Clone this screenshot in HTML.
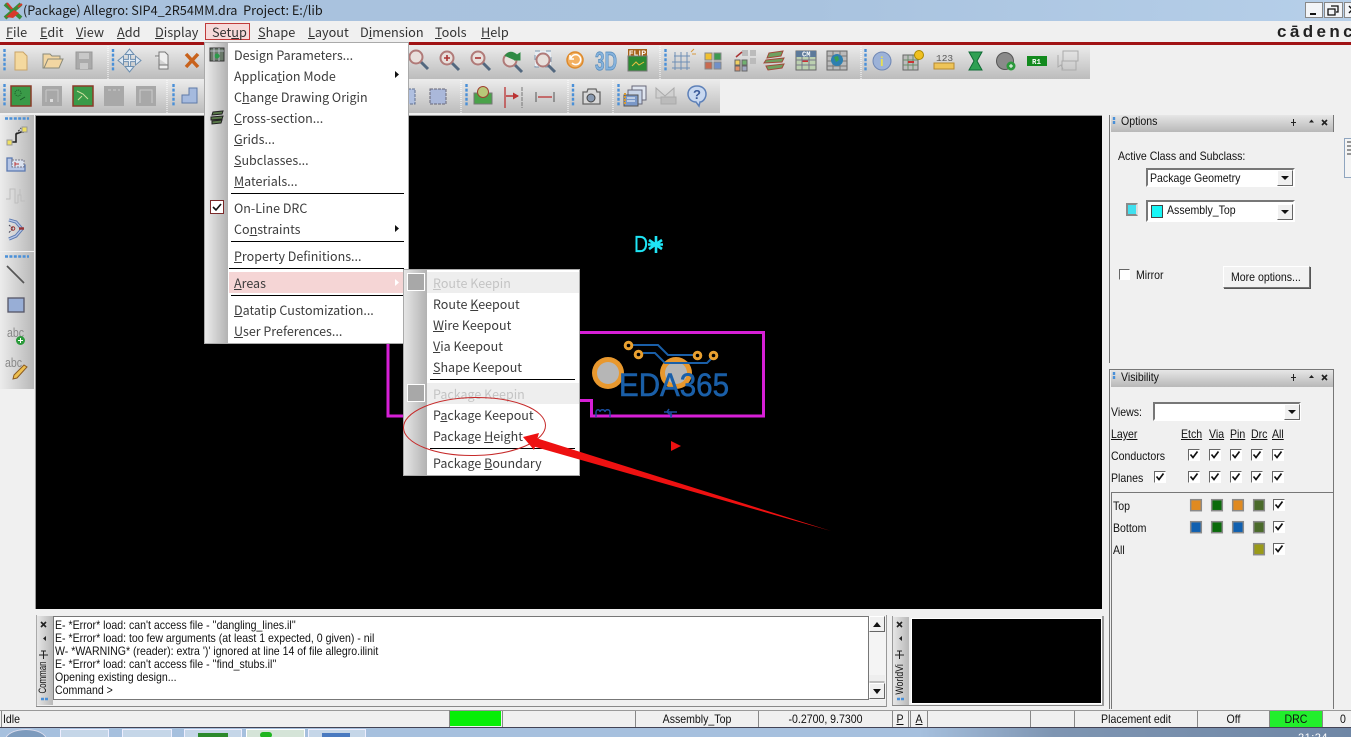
<!DOCTYPE html>
<html><head><meta charset="utf-8"><title>Allegro</title>
<style>
html,body{margin:0;padding:0;width:1351px;height:737px;overflow:hidden;background:#f0f0f0}
#p{position:relative;width:1351px;height:737px;overflow:hidden;background:#f0f0f0}
.b{position:absolute}
.t{position:absolute;white-space:nowrap;line-height:18px;height:18px;font-family:"Liberation Sans","Noto Sans CJK SC",sans-serif}
.y{font-family:"Noto Sans CJK SC","Liberation Sans",sans-serif;font-size:12.5px;color:#3c3c3c}
.m{font-family:"Noto Sans CJK SC","Liberation Sans",sans-serif;font-size:12.7px;color:#333}
.a{font-size:12px;color:#111;transform:scaleX(.88);transform-origin:0 50%}
.c{font-size:12px;color:#111;transform:scaleX(.88);transform-origin:50% 50%;text-align:center}
svg{position:absolute;left:0;top:0}
</style></head><body><div id="p">

<div class="b" style="left:0;top:0;width:1351px;height:21px;background:linear-gradient(90deg,#a9c2dd,#a9c3df 60%,#b6cfe9)"></div>
<div class="b" style="left:0;top:42px;width:1351px;height:3px;background:#a01214"></div>
<div class="b" style="left:0;top:45px;width:1090px;height:34px;background:linear-gradient(#ececec,#bcbcbc)"></div>
<div class="b" style="left:0;top:79px;width:720px;height:34px;background:linear-gradient(#ececec,#bcbcbc)"></div>
<div class="b" style="left:0;top:115px;width:34px;height:136px;background:linear-gradient(90deg,#ececec,#b8b8b8)"></div>
<div class="b" style="left:0;top:252px;width:34px;height:137px;background:linear-gradient(90deg,#ececec,#b8b8b8)"></div>
<div class="b" style="left:35px;top:115px;width:1067px;height:494px;background:#000;border-top:1px solid #999;box-sizing:border-box;border-left:1px solid #999"></div>

<svg width="1351" height="737" viewBox="0 0 1351 737">
<defs>
<g id="grip"><path d="M0 0v23" stroke="#4a90d8" stroke-width="2.4" stroke-dasharray="3 1.6"/></g>
<g id="mag"><path d="M4 4l8 8" stroke="#53687f" stroke-width="3"/><circle r="6.5" fill="#e8e0dc" stroke="#b07a78" stroke-width="2"/></g>
</defs>

<!-- separators -->
<g stroke="#fff" stroke-dasharray="1 1">
<path d="M108 46v33M660 46v33M861 46v33M167 80v33M461 80v33M568 80v33M613 80v33"/></g>
<!-- grips -->
<use href="#grip" x="4.5" y="49"/><use href="#grip" x="113" y="49"/><use href="#grip" x="665.5" y="49"/><use href="#grip" x="865.5" y="49"/>
<use href="#grip" x="4.5" y="84"/><use href="#grip" x="173.5" y="84"/><use href="#grip" x="466.5" y="84"/><use href="#grip" x="573" y="84"/><use href="#grip" x="618.5" y="84"/>
<path d="M5 118.5h24M5 256.5h24" stroke="#4a90d8" stroke-width="2.4" stroke-dasharray="3 1.4"/>

<!-- row1 -->
<path d="M15 52h8l4 4v14H15z" fill="#f4d99f" stroke="#c9a468"/>
<path d="M43 68V54h7l2 2h8v3h-12l-4 9zM44 68l4-9h15l-4 9z" fill="#f2d6a2" stroke="#8a8a7a"/>
<path d="M76 52h16v17H76z" fill="#aaa" stroke="#999"/><path d="M79 53h10v6H79zM80 63h8v6h-8z" fill="#c8c8c8"/>
<path d="M129.5 53v15M122 60.5h15" stroke="#6d8fb0" stroke-width="3.2"/><path d="M129.5 53v15M122 60.5h15" stroke="#e3ecf5" stroke-width="1.2"/>
<path d="M129.5 49l4.500 5.500h-9zM129.5 72l4.500-5.500h-9zM118 60.5l5.500-4.500v9zM141 60.5l-5.500-4.500v9z" fill="#dfe9f3" stroke="#6d8fb0"/>
<path d="M159 52h6l3 3v10h-9zM155 56h4v13h9v-4" fill="#efefef" stroke="#777"/>
<path d="M186 54l12 13M198 54l-12 13" stroke="#c8621c" stroke-width="3.5"/>
<use href="#mag" x="416" y="57"/>
<use href="#mag" x="447" y="58"/><path d="M444 58h6M447 55v6" stroke="#a33" stroke-width="1.6"/>
<use href="#mag" x="478" y="58"/><path d="M475 58h6" stroke="#a33" stroke-width="1.6"/>
<use href="#mag" x="510" y="60"/><path d="M505 56q5-7 12-1l3-2v7h-6" fill="#2f8a45" stroke="#2f8a45"/>
<path d="M535 51h16v16h-16z" fill="#e8eef4" stroke="#7d95ad" stroke-dasharray="5 6"/><use href="#mag" x="543" y="60"/>
<circle cx="575" cy="60" r="8" fill="#f3b061" stroke="#dd8a2c" stroke-width="1.5"/><path d="M571 58a5 5 0 1 1 1 5M570 55v4h4" fill="none" stroke="#fff" stroke-width="1.5"/>
<text x="595" y="70" font-family="Liberation Sans" font-weight="700" font-size="26" fill="#86b2dc" stroke="#4f87b8" stroke-width=".7" textLength="22" lengthAdjust="spacingAndGlyphs">3D</text>
<rect x="628" y="49" width="19" height="7" fill="#a5621b"/><rect x="628" y="56" width="19" height="15" fill="#2b8a32" stroke="#777"/><path d="M632 66l4-4 3 3 5-3" stroke="#e8c040" fill="none"/>
<text x="629" y="55.5" font-family="Liberation Sans" font-weight="700" font-size="7" fill="#fff" textLength="17">FLIP</text>
<path d="M674 56h16M672 62h18M672 68h18M675 52v18M681 52v18M687 52v18" stroke="#6f8fb5"/><path d="M691 52l3-3M692 54h4" stroke="#d89a40"/>
<rect x="705" y="53" width="7" height="7" fill="#f0c030" stroke="#888"/><rect x="714" y="53" width="7" height="7" fill="#3c9a50" stroke="#888"/><rect x="705" y="62" width="7" height="7" fill="#c86a50" stroke="#888"/><rect x="714" y="62" width="7" height="7" fill="#7090c8" stroke="#888"/>
<rect x="735" y="60" width="5" height="5" fill="#f0d060" stroke="#666"/><rect x="742" y="60" width="5" height="5" fill="#70b070" stroke="#666"/><rect x="735" y="66" width="5" height="5" fill="#e0906a" stroke="#666"/><rect x="742" y="66" width="5" height="5" fill="#a0a8c0" stroke="#666"/><rect x="742" y="50" width="6" height="6" fill="#bbb"/><rect x="750" y="50" width="6" height="6" fill="#bbb"/><rect x="750" y="58" width="6" height="6" fill="#bbb"/><path d="M736 57l6-5" stroke="#a33" stroke-width="1.5"/>
<path d="M769 53l14-2-2 5-14 2zM766 60l18-2-2 4-18 1zM766 66l18-2-2 4-14 2z" fill="#6fa060" stroke="#a04a3a"/>
<rect x="796" y="51" width="20" height="19" fill="#bcd0b0" stroke="#666"/><rect x="796" y="51" width="20" height="6" fill="#5d7a9a"/><path d="M802 61h6" stroke="#c33" stroke-width="2"/><path d="M796 60h20M796 65h20M802 57v13M809 57v13" stroke="#778"/>
<text x="802" y="56.5" font-family="Liberation Mono" font-weight="700" font-size="7" fill="#fff">CM</text>
<rect x="827" y="51" width="20" height="19" fill="#bbb" stroke="#666"/><path d="M827 56h20M827 61h20M827 66h20M833 51v19M840 51v19" stroke="#777"/><circle cx="837" cy="60" r="6" fill="#2e7fb0"/><path d="M834 57l4-1 1 4-3 2z" fill="#3aa050"/>
<circle cx="882" cy="61" r="9" fill="#9cb2d8" stroke="#6f87b4"/><text x="880" y="66" font-family="Liberation Sans" font-weight="700" font-size="13" fill="#e8e050">i</text>
<rect x="903" y="55" width="15" height="15" fill="#bdbdbd" stroke="#666"/><path d="M903 60h15M903 65h15M908 55v15M913 55v15" stroke="#6a8a6a"/><path d="M908 62h6" stroke="#c33" stroke-width="2"/><circle cx="919" cy="55" r="4.5" fill="#f0c020" stroke="#a80"/>
<text x="936" y="61" font-family="Liberation Mono" font-size="9.5" fill="#555">123</text><rect x="934" y="63" width="20" height="6" fill="#eec458" stroke="#b78a30"/>
<path d="M969 52h13l-5 9 5 9h-13l5-9z" fill="#2fa053" stroke="#0e6b34"/>
<circle cx="1005" cy="61" r="8.5" fill="#8a8a8a" stroke="#555"/><circle cx="1011" cy="66" r="4.5" fill="#2c9a3c"/><path d="M1009 66h4M1011 64v4" stroke="#fff"/>
<rect x="1027" y="56" width="20" height="10" fill="#128a1e"/><text x="1032" y="64" font-family="Liberation Mono" font-weight="700" font-size="7.5" fill="#fff">R1</text>
<path d="M1063 51h15v10h-15zM1062 61h14v9h-14zM1058 55v12l3-2 2 4" fill="none" stroke="#aaa"/>

<!-- row2 -->
<rect x="11" y="86" width="20" height="20" fill="#3a9a48" stroke="#8a3a28" stroke-width="1.5"/><circle cx="18" cy="93" r="3" fill="none" stroke="#1a5a28" stroke-dasharray="1 1"/><path d="M20 100l5-3" stroke="#1a5a28"/>
<rect x="42" y="86" width="20" height="20" fill="#a8a8a8"/><path d="M46 90h12v12M46 90v12" stroke="#c8c8c8" fill="none"/><rect x="50" y="99" width="3" height="3" fill="#ddd"/>
<rect x="73" y="86" width="20" height="20" fill="#3a9a48" stroke="#8a3a28" stroke-width="1.5"/><path d="M77 91l6 3 5 5M78 100l4-4" stroke="#d0e0a0" fill="none"/>
<rect x="104" y="86" width="20" height="20" fill="#a8a8a8"/><path d="M108 90h12" stroke="#ccc" stroke-dasharray="3 2"/>
<rect x="136" y="86" width="20" height="20" fill="#a8a8a8"/><path d="M140 103V90h12v13" stroke="#ccc" fill="none"/>
<path d="M182 103V95h7v-7h8v15z" fill="#a5bade" stroke="#5e7aa8"/>
<rect x="400" y="89" width="15" height="15" fill="#b0c0e0" stroke="#607090" stroke-dasharray="3 1"/><rect x="430" y="89" width="16" height="15" fill="#aab8da" stroke="#667" stroke-dasharray="3 1"/>
<rect x="474" y="93" width="18" height="11" fill="#4aa24a" stroke="#777"/><circle cx="483" cy="92" r="5.5" fill="#b8c878" stroke="#a04030"/>
<path d="M505 87v21M522 87v21" stroke="#777" stroke-dasharray="4 1"/><path d="M506 96h12" stroke="#b33" stroke-width="1.5"/><path d="M513 92.5l6 3.500-6 3.500z" fill="#b33"/><path d="M505 87v21" stroke="#b33" stroke-width="1.3"/>
<path d="M536 92v10M554 92v10" stroke="#555"/><path d="M538 97h14" stroke="#b33" stroke-width="1.3"/>
<path d="M583 92h4l1-3h8l1 3h3v12h-17z" fill="#d8d8d8" stroke="#666" stroke-width="1.3"/><circle cx="591" cy="98" r="4" fill="#8a9ab0" stroke="#444"/>
<rect x="632" y="86" width="14" height="14" fill="#e0e6f0" stroke="#667"/><rect x="628" y="90" width="14" height="14" fill="#c8d4e8" stroke="#667"/><rect x="624" y="95" width="14" height="11" fill="#7a98c8" stroke="#555"/><path d="M627 98h8M627 101h8" stroke="#fff"/><path d="M625 93v11" stroke="#d89a30" stroke-width="2" stroke-dasharray="2 1"/>
<path d="M656 88l9 8 9-8v10h-18z" fill="#d0d0d0" stroke="#aaa"/><rect x="661" y="97" width="15" height="7" fill="#bbb" stroke="#aaa"/>
<path d="M697 86c6 0 9 4 9 8s-3 8-6 8l-1 4-3-4c-5 0-8-4-8-8s3-8 9-8z" fill="#c8d8f0" stroke="#5d80b8" stroke-width="1.5"/><text x="693" y="99" font-family="Liberation Sans" font-weight="700" font-size="13" fill="#3a5a9a">?</text>

<!-- left toolbar -->
<path d="M10 142h6v-8l5-2h3" fill="none" stroke="#222" stroke-width="1.6"/><path d="M16 134l5-6" stroke="#222" stroke-dasharray="2 1.5"/><rect x="7" y="140" width="5" height="5" fill="#efe060" stroke="#999"/><rect x="22" y="127" width="5" height="5" fill="#efe060" stroke="#999"/>
<path d="M7 158v13h18v-6H12v-7z" fill="#b6c6e6" stroke="#5a78b0" stroke-width="1.3"/><rect x="12" y="160" width="12" height="7" fill="#dbe2ef" stroke="#778" stroke-dasharray="2 1"/><path d="M15 164h4M15 162v4" stroke="#b33"/>
<path d="M6 199h4v-10h5v14h3M18 203v-8h2v-6M18 195h3v6h4" fill="none" stroke="#bdbdbd"/>
<path d="M9 220l7 2 6 7-6 7-7 3" fill="none" stroke="#5a78b0" stroke-width="3.2"/><path d="M9 220l7 2 6 7-6 7-7 3" fill="none" stroke="#b8c8e6" stroke-width="1.3"/>
<path d="M9 225l4 3.500-4 4" fill="none" stroke="#445" stroke-dasharray="2 1"/><circle cx="13" cy="228.5" r="1.8" fill="none" stroke="#933"/><path d="M19 228.5h5" stroke="#933" stroke-width="2.4"/>
<path d="M7 266l17 17" stroke="#555" stroke-width="1.7"/>
<rect x="8" y="298" width="16" height="14" fill="#98aed6" stroke="#556" stroke-width="1.3"/>
<text x="7" y="337" font-family="Liberation Sans" font-size="13" fill="#888" textLength="17" lengthAdjust="spacingAndGlyphs">abc</text>
<circle cx="20.5" cy="340.5" r="4.5" fill="#2a9a3a"/><path d="M18 340.5h5M20.5 338v5" stroke="#fff"/>
<text x="5" y="367" font-family="Liberation Sans" font-size="13" fill="#888" textLength="17" lengthAdjust="spacingAndGlyphs">abc</text>
<path d="M14 375l10-10 3 2-10 11-4 1z" fill="#eec050" stroke="#8a5a20"/>

<!-- Canvas content -->
<g fill="none" stroke="#d61fd6" stroke-width="3">
<path d="M388 344v72h16M580 400.5h11.500V416H763.500V332.500H579"/></g>
<g fill="#e8982e"><circle cx="608" cy="373" r="16"/><circle cx="676" cy="373" r="16"/></g>
<circle cx="608" cy="373" r="11" fill="#b6b6b6"/><circle cx="676" cy="373" r="11" fill="#b6b6b6"/>
<g fill="none" stroke="#1a5fa8" stroke-width="2"><path d="M633 345h25l10 10h25M643 353h12l10 10h42l5-5"/></g>
<g fill="#000" stroke="#e8a030" stroke-width="3"><circle cx="628.5" cy="345.5" r="3.3"/><circle cx="638.5" cy="354.5" r="3.3"/><circle cx="697.5" cy="355.5" r="3.3"/><circle cx="713.5" cy="355.5" r="3.3"/></g>
<text x="619" y="396" font-family="Liberation Sans" font-size="32" fill="#1a5fa8" stroke="#1a5fa8" stroke-width=".6" textLength="110" lengthAdjust="spacingAndGlyphs">EDA365</text>
<path d="M596 417v-5c0-3 4-3 4 0 0-3 5-3 5 0 0-3 5-3 5 0v5" fill="none" stroke="#1a4fa0" stroke-width="1.4"/>
<path d="M664 412h13M669 409l-2 3 5 4M671 412v6" fill="none" stroke="#1a4fa0" stroke-width="1.5"/>
<text x="634" y="252" font-family="Liberation Sans" font-size="23" fill="#1fe5f5" stroke="#1fe5f5" stroke-width=".3" textLength="14" lengthAdjust="spacingAndGlyphs">D</text>
<path d="M656 236v17M649 240l13 9M649 249l13-9M648 244.5h15" stroke="#1fe5f5" stroke-width="2.6"/>
<path d="M671 441l10 5-10 5z" fill="#ee1111"/>

<!-- right panels lines -->
<path d="M1109.5 115v248M1333.5 115v17M1109.5 369v340M1333.5 369v340M1109 369.5h225" stroke="#777" fill="none"/>
<path d="M1111.5 492v217M1111 492.5h222" stroke="#777" fill="none"/>
</svg>

<!-- panel headers -->
<div class="b" style="left:1111px;top:115px;width:222px;height:17px;background:linear-gradient(#e6e6e6,#b8b8b8)"></div>
<div class="b" style="left:1111px;top:370px;width:222px;height:17px;background:linear-gradient(#e6e6e6,#b8b8b8)"></div>
<div class="b" style="left:37px;top:616px;width:16px;height:89px;background:linear-gradient(90deg,#e6e6e6,#b8b8b8)"></div>
<div class="b" style="left:893px;top:617px;width:16px;height:88px;background:linear-gradient(90deg,#e6e6e6,#b8b8b8)"></div>

<!-- command box -->
<div class="b" style="left:53px;top:616px;width:816px;height:84px;background:#fff;border:1px solid #777;box-sizing:border-box"></div>
<div class="b" style="left:869px;top:616px;width:17px;height:84px;background:#f4f4f4"></div>
<div class="b" style="left:36px;top:706px;width:851px;height:1px;background:#888"></div>
<div class="b" style="left:36px;top:615px;width:1px;height:91px;background:#aaa"></div>
<div class="b" style="left:886px;top:615px;width:1px;height:92px;background:#999"></div>
<div class="b" style="left:892px;top:616px;width:1px;height:90px;background:#999"></div>
<div class="b" style="left:892px;top:705px;width:211px;height:1px;background:#888"></div>
<div class="b" style="left:1102px;top:616px;width:2px;height:90px;background:#999"></div>
<div class="b" style="left:911px;top:618px;width:191px;height:86px;background:#000;border:1px solid #fff;box-sizing:border-box"></div>

<!-- status bar -->
<div class="b" style="left:0;top:710px;width:1351px;height:1px;background:#999"></div>
<div class="b" style="left:450px;top:711px;width:51px;height:15px;background:#06ee06"></div>
<div class="b" style="left:1270px;top:711px;width:52px;height:16px;background:#22ee2c"></div>
<div class="b" style="left:0;top:727px;width:1351px;height:1px;background:#445"></div>
<svg width="1351" height="737" viewBox="0 0 1351 737">
<path d="M1.5 711v16M449.5 710v17M502.5 711v16M635.5 711v16M758.5 711v16M892.5 711v16M908.5 711v16M910.5 711v16M927.5 711v16M1030.5 711v16M1074.5 711v16M1197.5 711v16M1269.5 711v16M1322.5 711v16" stroke="#888"/>
</svg>

<!-- taskbar -->
<div class="b" style="left:0;top:728px;width:1351px;height:9px;background:linear-gradient(90deg,#a6c0de,#a6c0de 68%,#7e95b2 78%,#6f87a6)"></div>
<div class="b" style="left:5px;top:729px;width:40px;height:20px;border-radius:50%;background:#7d9bbd;border:1px solid #dde"></div>
<div class="b" style="left:60px;top:729px;width:49px;height:12px;background:#c5d6e8;border:1px solid #eef;box-sizing:border-box"></div>
<div class="b" style="left:122px;top:729px;width:50px;height:12px;background:#c5d6e8;border:1px solid #eef;box-sizing:border-box"></div>
<div class="b" style="left:184px;top:729px;width:58px;height:12px;background:#c5d6e8;border:1px solid #eef;box-sizing:border-box"></div>
<div class="b" style="left:198px;top:733px;width:30px;height:6px;background:#2c8a2c"></div>
<div class="b" style="left:246px;top:729px;width:59px;height:12px;background:#d5e4d8;border:1px solid #fff;box-sizing:border-box"></div>
<div class="b" style="left:260px;top:732px;width:12px;height:6px;background:#1fb51f;border-radius:6px"></div>
<div class="b" style="left:308px;top:729px;width:58px;height:12px;background:#c5d6e8;border:1px solid #eef;box-sizing:border-box"></div>
<div class="b" style="left:322px;top:733px;width:28px;height:6px;background:#4a7ac0"></div>
<div class="t" style="left:1298px;top:729px;font-size:11px;color:#fff;letter-spacing:.5px">21:24</div>

<!-- title, menu -->
<svg width="24" height="20" viewBox="0 0 24 20" style="left:2px;top:1px"><path d="M3 3l16 14M3 17L19 3" stroke="#3a8a3a" stroke-width="4"/><path d="M4 16l8-7 5 3-6 5z" fill="#d8382c"/><path d="M5 2l5 6M16 6l4-3" stroke="#d8382c" stroke-width="2"/></svg>
<div class="t" style="left:23px;top:1px;font-family:'Noto Sans CJK SC','Liberation Sans',sans-serif;font-size:12.7px;color:#1a1a1a;">(Package) Allegro: SIP4_2R54MM.dra&nbsp; Project: E:/lib</div>
<div class="b" style="left:205px;top:23px;width:45px;height:17px;background:#f6dada;border:1px solid #c03a3a;box-sizing:border-box"></div>
<div class="t m" style="left:6px;top:23px"><u>F</u>ile</div>
<div class="t m" style="left:40px;top:23px"><u>E</u>dit</div>
<div class="t m" style="left:76px;top:23px"><u>V</u>iew</div>
<div class="t m" style="left:117px;top:23px"><u>A</u>dd</div>
<div class="t m" style="left:155px;top:23px"><u>D</u>isplay</div>
<div class="t m" style="left:212px;top:23px">Set<u>u</u>p</div>
<div class="t m" style="left:258px;top:23px"><u>S</u>hape</div>
<div class="t m" style="left:308px;top:23px"><u>L</u>ayout</div>
<div class="t m" style="left:360px;top:23px">D<u>i</u>mension</div>
<div class="t m" style="left:435px;top:23px"><u>T</u>ools</div>
<div class="t m" style="left:481px;top:23px"><u>H</u>elp</div>
<div class="t" style="left:1277px;top:23px;font-family:'Liberation Sans';font-size:17px;letter-spacing:3.4px;color:#222;font-weight:700">cādence</div>
<div class="b" style="left:1305px;top:2px;width:18px;height:16px;background:#f2f4f7;border:1px solid #888;box-sizing:border-box"></div>
<div class="b" style="left:1324px;top:2px;width:19px;height:16px;background:#f2f4f7;border:1px solid #888;box-sizing:border-box"></div>
<div class="b" style="left:1344px;top:2px;width:10px;height:16px;background:#f2f4f7;border:1px solid #888;box-sizing:border-box"></div>
<svg width="1351" height="22" viewBox="0 0 1351 22"><path d="M1310 14h6" stroke="#111" stroke-width="2"/><path d="M1331 6h7v6h-2M1328 9h7v6h-7z" fill="none" stroke="#111" stroke-width="1.3"/><path d="M1349 6l3 3M1349 13l3-3" stroke="#111" stroke-width="1.5"/></svg>

<!-- Options panel -->
<div class="t a" style="left:1121px;top:112px;">Options</div>
<div class="t a" style="left:1118px;top:147px;">Active Class and Subclass:</div>
<div class="b" style="left:1146px;top:168px;width:149px;height:19px;background:#fff;border:2px solid #777;border-right-color:#fff;border-bottom-color:#fff;box-sizing:border-box"></div>
<div class="t a" style="left:1150px;top:169px;">Package Geometry</div>
<div class="b" style="left:1146px;top:200px;width:149px;height:22px;background:#fff;border:2px solid #777;border-right-color:#fff;border-bottom-color:#fff;box-sizing:border-box"></div>
<div class="b" style="left:1151px;top:205px;width:12px;height:13px;background:#18f5f5;border:1px solid #444;box-sizing:border-box"></div>
<div class="t a" style="left:1167px;top:201px;">Assembly_Top</div>
<div class="b" style="left:1126px;top:203px;width:12px;height:13px;background:#3fe0ef;border:2px solid #8a8a8a;border-right-color:#ddd;border-bottom-color:#888;box-sizing:border-box"></div>
<div class="t a" style="left:1136px;top:266px;">Mirror</div>
<div class="b" style="left:1223px;top:266px;width:87px;height:22px;background:#f2f2f2;border:1px solid #777;border-top-color:#fff;border-left-color:#fff;box-sizing:border-box;box-shadow:1px 1px 0 #555"></div>
<div class="t a" style="left:1231px;top:268px;">More options...</div>

<!-- Visibility panel -->
<div class="t a" style="left:1121px;top:368px;">Visibility</div>
<div class="t a" style="left:1111px;top:403px;">Views:</div>
<div class="b" style="left:1153px;top:402px;width:148px;height:19px;background:#fff;border:2px solid #777;border-right-color:#fff;border-bottom-color:#fff;box-sizing:border-box"></div>
<div class="t a" style="left:1111px;top:425px;"><u>Layer</u></div>
<div class="t a" style="left:1181px;top:425px;"><u>Etch</u></div>
<div class="t a" style="left:1209px;top:425px;"><u>Via</u></div>
<div class="t a" style="left:1230px;top:425px;"><u>Pin</u></div>
<div class="t a" style="left:1251px;top:425px;"><u>Drc</u></div>
<div class="t a" style="left:1272px;top:425px;"><u>All</u></div>
<div class="t a" style="left:1111px;top:447px;">Conductors</div>
<div class="t a" style="left:1111px;top:469px;">Planes</div>
<div class="t a" style="left:1113px;top:497px;">Top</div>
<div class="t a" style="left:1113px;top:519px;">Bottom</div>
<div class="t a" style="left:1113px;top:541px;">All</div>

<svg width="1351" height="737" viewBox="0 0 1351 737">
<defs>
<g id="ck2"><rect x="0" y="0" width="12" height="12" fill="#fff"/><path d="M.5 11.5V.5H11.5" fill="none" stroke="#666"/><path d="M2.5 5.5l2.500 3 4.500-6" fill="none" stroke="#111" stroke-width="1.7"/></g>
<g id="sb"><rect width="16" height="16" fill="#f0f0f0"/><path d="M.5 15.5h15V.5" fill="none" stroke="#666"/><path d="M.5 15V.5H15" fill="none" stroke="#fff"/></g>
</defs>
<!-- dropdown buttons -->
<use href="#sb" x="1277" y="170"/><path d="M1281 176h8l-4 4z" fill="#111"/>
<use href="#sb" x="1277" y="204"/><path d="M1281 210h8l-4 4z" fill="#111"/>
<use href="#sb" x="1284" y="404"/><path d="M1288 410h8l-4 4z" fill="#111"/>
<!-- scrollbars -->
<use href="#sb" x="869" y="616"/><path d="M873 627h8l-4-5z" fill="#111"/>
<rect x="869" y="675" width="16" height="7" fill="#eee"/><path d="M869.5 682h15" stroke="#888"/>
<use href="#sb" x="869" y="683"/><path d="M873 689h8l-4 5z" fill="#111"/>
<!-- mirror -->
<rect x="1119" y="269" width="11" height="11" fill="#fff"/><path d="M1119.5 279.5v-10h10" fill="none" stroke="#666"/>
<!-- panel header icons -->
<g stroke="#222" fill="none">
<path d="M1291 122.5h5M1293.5 119v7"/><path d="M1291 377.5h5M1293.5 374v7"/>
<path d="M1322 120l5 5M1327 120l-5 5M1322 375l5 5M1327 375l-5 5" stroke-width="1.6"/>
</g>
<path d="M1309 122.5h5l-2.500-3zM1309 378h5l-2.500-3z" fill="#222"/>
<path d="M1114 117v3M1114 121v3M1114 372v3M1114 376v3" stroke="#4a90d8" stroke-width="2.4"/>
<!-- checkboxes -->
<use href="#ck2" x="1188" y="449"/><use href="#ck2" x="1209" y="449"/><use href="#ck2" x="1230" y="449"/><use href="#ck2" x="1251" y="449"/><use href="#ck2" x="1272" y="449"/>
<use href="#ck2" x="1154" y="471"/><use href="#ck2" x="1188" y="471"/><use href="#ck2" x="1209" y="471"/><use href="#ck2" x="1230" y="471"/><use href="#ck2" x="1251" y="471"/><use href="#ck2" x="1272" y="471"/>
<use href="#ck2" x="1273" y="499"/><use href="#ck2" x="1273" y="521"/><use href="#ck2" x="1273" y="543"/>
<!-- swatches -->
<g stroke="#8a8a8a" stroke-width="1.5">
<rect x="1190.7" y="499.7" width="10.6" height="11" fill="#e08a20"/><rect x="1211.7" y="499.7" width="10.6" height="11" fill="#0b6b0b"/><rect x="1232.7" y="499.7" width="10.6" height="11" fill="#e08a20"/><rect x="1253.7" y="499.7" width="10.6" height="11" fill="#4a6a2a"/>
<rect x="1190.7" y="521.7" width="10.6" height="11" fill="#1060b0"/><rect x="1211.7" y="521.7" width="10.6" height="11" fill="#0b6b0b"/><rect x="1232.7" y="521.7" width="10.6" height="11" fill="#1060b0"/><rect x="1253.7" y="521.7" width="10.6" height="11" fill="#4a6a2a"/>
<rect x="1253.7" y="543.7" width="10.6" height="11" fill="#9a9a18"/>
</g>
<!-- right edge tab -->
<path d="M1351 138.5h-6.500v39h6.500" fill="#f4f4f4" stroke="#8fa5bf"/>
<path d="M1347 142h4M1347 146h4M1347 150h4M1347 154h4" stroke="#333"/>
</svg>

<!-- dock labels -->
<div class="t" style="left:20px;top:668px;width:46px;font-size:11px;color:#111;transform:rotate(-90deg) scaleX(.72);">Comman</div>
<div class="t" style="left:878px;top:668px;width:44px;font-size:11px;color:#111;transform:rotate(-90deg) scaleX(.8);">WorldVi</div>
<svg width="1351" height="737" viewBox="0 0 1351 737">
<path d="M41 622l5 5M46 622l-5 5M897 622l5 5M902 622l-5 5" stroke="#222" stroke-width="1.6"/>
<path d="M46 636v5l-3-2.500zM902 636v5l-3-2.500z" fill="#222"/>
<path d="M39 655h9M43.5 651v8M41 651h5M895 655h9M899.5 651v8M897 651h5" stroke="#222" fill="none"/>
<path d="M41 699h3M45 699h3M897 699h3M901 699h3" stroke="#4a90d8" stroke-width="2.4"/>
</svg>

<!-- command text -->
<div class="t a" style="left:55px;top:616px">E- *Error* load: can't access file - ''dangling_lines.il''</div>
<div class="t a" style="left:55px;top:629px">E- *Error* load: too few arguments (at least 1 expected, 0 given) - nil</div>
<div class="t a" style="left:55px;top:642px">W- *WARNING* (reader): extra ')' ignored at line 14 of file allegro.ilinit</div>
<div class="t a" style="left:55px;top:655px">E- *Error* load: can't access file - ''find_stubs.il''</div>
<div class="t a" style="left:55px;top:668px">Opening existing design...</div>
<div class="t a" style="left:55px;top:681px">Command &gt;</div>

<!-- status text -->
<div class="t a" style="left:3px;top:710px">Idle</div>
<div class="t c" style="left:636px;top:710px;width:122px">Assembly_Top</div>
<div class="t c" style="left:759px;top:710px;width:133px">-0.2700, 9.7300</div>
<div class="t c" style="left:892px;top:710px;width:16px"><u>P</u></div>
<div class="t c" style="left:911px;top:710px;width:16px"><u>A</u></div>
<div class="t c" style="left:1075px;top:710px;width:122px">Placement edit</div>
<div class="t c" style="left:1198px;top:710px;width:71px">Off</div>
<div class="t c" style="left:1270px;top:710px;width:52px">DRC</div>
<div class="t a" style="left:1340px;top:710px">0</div>

<!-- Setup menu -->
<div class="b" style="left:204px;top:42px;width:205px;height:302px;background:#fff;border:1px solid #aaa;box-sizing:border-box"></div>
<div class="b" style="left:205px;top:43px;width:23px;height:300px;background:linear-gradient(90deg,#ececec,#b2b2b2)"></div>
<div class="b" style="left:229px;top:272px;width:174px;height:21px;background:#f5d5d5"></div>
<div class="b" style="left:231px;top:193px;width:173px;height:1px;background:#000"></div>
<div class="b" style="left:231px;top:241px;width:173px;height:1px;background:#000"></div>
<div class="b" style="left:229px;top:268px;width:175px;height:1px;background:#000"></div>
<div class="b" style="left:231px;top:295px;width:173px;height:1px;background:#000"></div>
<div class="t y" style="left:234px;top:46px">Desi<u>g</u>n Parameters...</div>
<div class="t y" style="left:234px;top:67px">Applica<u>t</u>ion Mode</div>
<div class="t y" style="left:234px;top:88px">C<u>h</u>ange Drawing Origin</div>
<div class="t y" style="left:234px;top:109px"><u>C</u>ross-section...</div>
<div class="t y" style="left:234px;top:130px"><u>G</u>rids...</div>
<div class="t y" style="left:234px;top:151px"><u>S</u>ubclasses...</div>
<div class="t y" style="left:234px;top:172px"><u>M</u>aterials...</div>
<div class="t y" style="left:234px;top:199px">On-Line DRC</div>
<div class="t y" style="left:234px;top:220px">Co<u>n</u>straints</div>
<div class="t y" style="left:234px;top:247px"><u>P</u>roperty Definitions...</div>
<div class="t y" style="left:234px;top:274px"><u>A</u>reas</div>
<div class="t y" style="left:234px;top:301px"><u>D</u>atatip Customization...</div>
<div class="t y" style="left:234px;top:322px"><u>U</u>ser Preferences...</div>

<!-- Areas submenu -->
<div class="b" style="left:403px;top:269px;width:177px;height:207px;background:#fff;border:1px solid #aaa;box-sizing:border-box"></div>
<div class="b" style="left:404px;top:270px;width:23px;height:205px;background:linear-gradient(90deg,#e6e6e6,#b2b2b2)"></div>
<div class="b" style="left:427px;top:272px;width:152px;height:21px;background:#eeeeee"></div>
<div class="b" style="left:427px;top:383px;width:152px;height:21px;background:#eeeeee"></div>
<div class="b" style="left:407px;top:273px;width:18px;height:18px;background:#a8a8a8;border:1px solid #fff;box-sizing:border-box"></div>
<div class="b" style="left:407px;top:384px;width:18px;height:18px;background:#a8a8a8;border:1px solid #fff;box-sizing:border-box"></div>
<div class="b" style="left:430px;top:379px;width:145px;height:1px;background:#000"></div>
<div class="b" style="left:430px;top:448px;width:145px;height:1px;background:#000"></div>
<div class="t y" style="left:433px;top:274px;color:#c4c4c4"><u>R</u>oute Keepin</div>
<div class="t y" style="left:433px;top:295px">Route <u>K</u>eepout</div>
<div class="t y" style="left:433px;top:316px"><u>W</u>ire Keepout</div>
<div class="t y" style="left:433px;top:337px"><u>V</u>ia Keepout</div>
<div class="t y" style="left:433px;top:358px"><u>S</u>hape Keepout</div>
<div class="t y" style="left:433px;top:385px;color:#c4c4c4">Package Keepin</div>
<div class="t y" style="left:433px;top:406px">P<u>a</u>ckage Keepout</div>
<div class="t y" style="left:433px;top:427px">Package <u>H</u>eight</div>
<div class="t y" style="left:433px;top:454px">Package <u>B</u>oundary</div>

<!-- menu icons and overlay -->
<svg width="1351" height="737" viewBox="0 0 1351 737">
<rect x="210" y="48" width="14" height="13" fill="#6a7a6a" stroke="#333"/><path d="M210 51h14M214 48v13M219 48v13" stroke="#ccd" stroke-width=".8"/><circle cx="217" cy="56" r="2.5" fill="#2a9a4a"/>
<path d="M213 112l10-1-1 3-10 1zM211 117l12-1-1 3-11 1zM212 121l10-1-1 3-9 1z" fill="#5a7a4a" stroke="#222" stroke-width="1"/>
<rect x="210.5" y="200.5" width="13" height="13" fill="#fff" stroke="#7a2a2a"/><path d="M213 207l3 3 5-6" fill="none" stroke="#111" stroke-width="1.6"/>
<path d="M395 71v7l4-3.500zM395 225v7l4-3.500z" fill="#111"/>
<path d="M395 279v7l4-3.500z" fill="#fff"/>
<ellipse cx="474.5" cy="426.5" rx="71" ry="29" fill="none" stroke="#c62a2a" stroke-width="1" transform="rotate(-1 474.5 426.5)"/>
<path d="M523 437L539 433L534 450z" fill="#ee1111"/>
<path d="M536 438L831 531L532 446z" fill="#ee1111"/>
</svg>

</div></body></html>
